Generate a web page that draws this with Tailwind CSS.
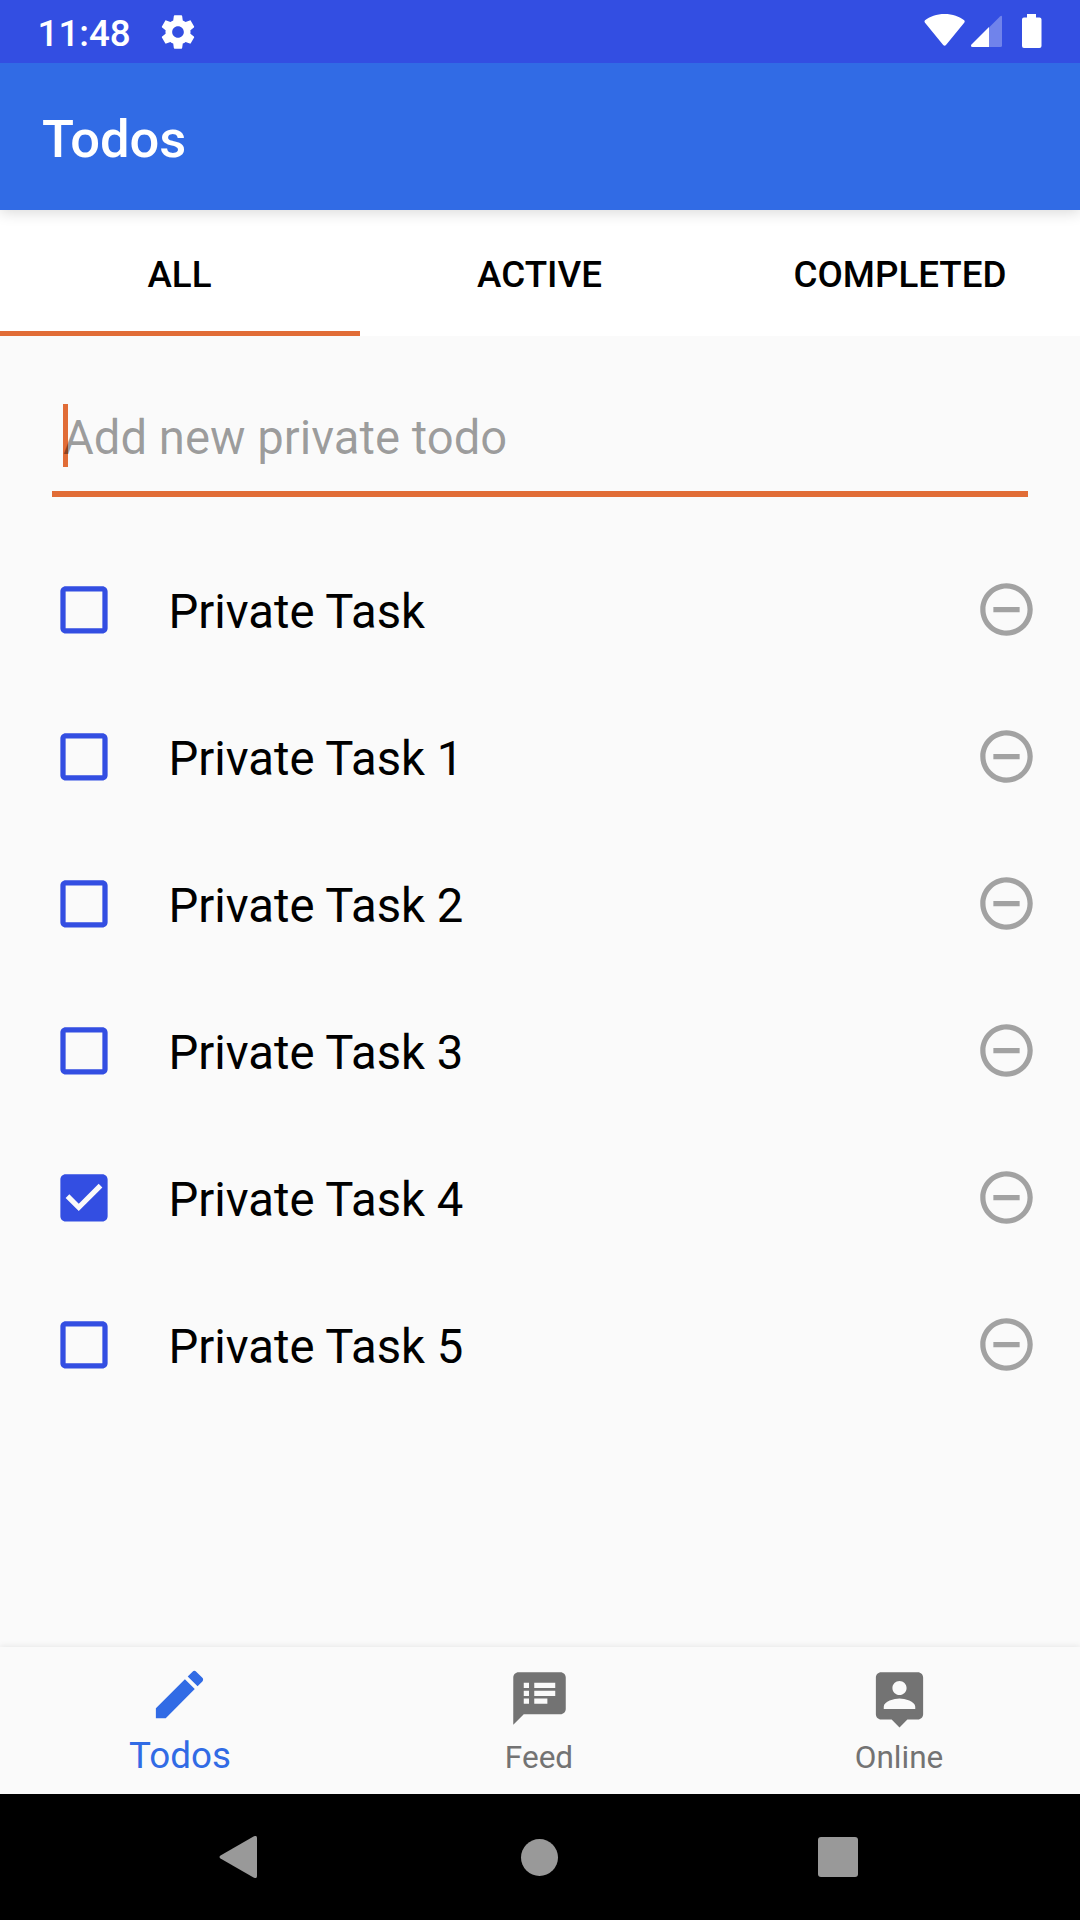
<!DOCTYPE html>
<html lang="en">
<head>
<meta charset="utf-8">
<title>Todos</title>
<script src="https://cdn.jsdelivr.net/npm/@tailwindcss/browser@4"></script>
</head>
<body class="w-[1080px] h-[1920px] overflow-hidden bg-[#fafafa] font-['Roboto',sans-serif] text-black flex flex-col">
  <header class="relative z-20 shrink-0 h-[63px] bg-[#334ee2] text-white flex items-center pl-[37.5px] pr-[33px]">
    <span class="text-[36.75px] leading-none font-medium pt-[6px]">11:48</span>
    <svg class="ml-[27.5px] size-10" viewBox="0 0 24 24" fill="currentColor"><path d="M19.43 12.98c.04-.32.07-.64.07-.98s-.03-.66-.07-.98l2.11-1.65c.19-.15.24-.42.12-.64l-2-3.46c-.12-.22-.39-.3-.61-.22l-2.49 1c-.52-.4-1.08-.73-1.69-.98l-.38-2.65C14.46 2.18 14.25 2 14 2h-4c-.25 0-.46.18-.49.42l-.38 2.65c-.61.25-1.17.59-1.69.98l-2.49-1c-.23-.09-.49 0-.61.22l-2 3.46c-.13.22-.07.49.12.64l2.11 1.65c-.04.32-.07.65-.07.98s.03.66.07.98l-2.11 1.65c-.19.15-.24.42-.12.64l2 3.46c.12.22.39.3.61.22l2.49-1c.52.4 1.08.73 1.69.98l.38 2.65c.03.24.24.42.49.42h4c.25 0 .46-.18.49-.42l.38-2.65c.61-.25 1.17-.59 1.69-.98l2.49 1c.23.09.49 0 .61-.22l2-3.46c.12-.22.07-.49-.12-.64l-2.11-1.65zM12 15.5c-1.93 0-3.5-1.57-3.5-3.5s1.57-3.5 3.5-3.5 3.5 1.57 3.5 3.5-1.57 3.5-3.5 3.5z"/></svg>
    <svg class="ml-auto w-[123px] h-[63px]" viewBox="924 0 123 63" fill="currentColor">
      <path d="M944.6 14c8 0 15 2.600 19.600 6.200q1 1 .2 2.200L946 45q-1.400 1.600-2.800 0L924.800 22.400q-.8-1.200.2-2.200c4.600-3.600 11.600-6.200 19.600-6.200z"/>
      <path opacity=".3" d="M1002 17v28.500q0 1.500-1.500 1.500H989V27.500l11-11q2-1.500 2 .5z"/>
      <path d="M989 27v20h-16.500q-2.500-.5-1-2.500z"/>
      <path d="M1027 14h9v3.500h3.500q2 0 2 2V46q0 2-2 2h-15.500q-2 0-2-2V19.500q0-2 2-2h3z"/>
    </svg>
  </header>
  <div class="relative z-10 shrink-0 h-[147px] bg-[#316be5] text-white flex items-center pl-[42px] shadow-[0_2px_14px_rgba(0,0,0,0.16)]">
    <h1 class="text-[52.5px] leading-none font-medium tracking-[-0.1px] pt-[5px]">Todos</h1>
  </div>
  <nav class="shrink-0 h-[126px] bg-white grid grid-cols-3 text-[36.75px] leading-none font-medium">
    <div class="flex items-center justify-center border-b-5 border-[#e16c36] pt-[10px] pr-px"><span>ALL</span></div>
    <div class="flex items-center justify-center border-b-5 border-transparent pt-[10px] pr-px"><span>ACTIVE</span></div>
    <div class="flex items-center justify-center border-b-5 border-transparent pt-[10px]"><span>COMPLETED</span></div>
  </nav>
  <main class="grow flex flex-col">
    <div class="mx-[52px] mt-[68px] h-[93px] border-b-6 border-[#e16c36] flex items-start pl-[11px]">
      <div class="relative h-[63px] flex items-center text-[47.25px] leading-none text-black/38">
        <i class="absolute left-0 top-0 w-[5px] h-[63px] bg-[#e16c36]"></i>
        <span class="relative pt-[7px]">Add new private todo</span>
      </div>
    </div>
    <ul id="todos" class="mt-[39px] flex flex-col text-[47.25px] leading-none"></ul>
  </main>
  <footer class="shrink-0 h-[147px] grid grid-cols-3 text-[#737373] bg-[#fafafa] shadow-[0_-1px_6px_rgba(0,0,0,0.08)]">
    <div class="flex flex-col items-center pt-[16px] text-[#316be5]">
      <svg class="size-[63px] mr-px" viewBox="0 0 24 24" fill="currentColor"><path d="M3 17.250V21h3.750L17.810 9.940l-3.750-3.750L3 17.250zM20.710 7.040c.39-.39.39-1.020 0-1.410l-2.340-2.340c-.39-.39-1.020-.39-1.410 0l-1.830 1.830 3.750 3.750 1.830-1.830z"/></svg>
      <span class="text-[36.75px] leading-none mt-3">Todos</span>
    </div>
    <div class="flex flex-col items-center pt-5">
      <svg class="size-[63px] mr-px" viewBox="0 0 24 24" fill="currentColor"><path d="M20 2H4c-1.100 0-1.990.9-1.990 2L2 22l4-4h14c1.100 0 2-.9 2-2V4c0-1.100-.9-2-2-2zM8 14H6v-2h2v2zm0-3H6V9h2v2zm0-3H6V6h2v2zm7 6h-5v-2h5v2zm3-3h-8V9h8v2zm0-3h-8V6h8v2z"/></svg>
      <span class="text-[31.5px] leading-none mt-[11.5px] mr-0.5">Feed</span>
    </div>
    <div class="flex flex-col items-center pt-5">
      <svg class="size-[63px] mr-px" viewBox="0 0 24 24" fill="currentColor"><path d="M19 2H5c-1.110 0-2 .9-2 2v14c0 1.100.89 2 2 2h4l3 3 3-3h4c1.100 0 2-.9 2-2V4c0-1.100-.9-2-2-2zm-7 3.300c1.490 0 2.700 1.210 2.700 2.700s-1.210 2.700-2.700 2.700S9.300 9.490 9.300 8s1.210-2.700 2.700-2.700zM18 16H6v-.9c0-2 4-3.100 6-3.100s6 1.100 6 3.100v.9z"/></svg>
      <span class="text-[31.5px] leading-none mt-[11.5px] mr-0.5">Online</span>
    </div>
  </footer>
  <div class="shrink-0 h-[126px] bg-black text-[#999] flex items-center justify-between pl-[219px] pr-[222px]">
    <svg class="w-[38px] h-[42px]" viewBox="0 0 38 42" fill="currentColor"><path d="M34.500.5Q38-1.200 38 2v38q0 3.200-3.500 1.500L1.500 22.500Q-.5 21 1.500 19.500z"/></svg>
    <i class="ml-1 size-[37px] rounded-full bg-[#999]"></i>
    <i class="size-10 rounded-[3px] bg-[#999]"></i>
  </div>
  <script>
    const box = '<path d="M19 5v14H5V5h14m0-2H5c-1.100 0-2 .9-2 2v14c0 1.100.9 2 2 2h14c1.100 0 2-.9 2-2V5c0-1.100-.9-2-2-2z"/>';
    const checked = '<path d="M19 3H5c-1.110 0-2 .9-2 2v14c0 1.100.89 2 2 2h14c1.110 0 2-.9 2-2V5c0-1.100-.89-2-2-2zm-9 14l-5-5 1.410-1.410L10 14.170l7.590-7.590L19 8l-9 9z"/>';
    const minus = '<path d="M7 11v2h10v-2H7zm5-9C6.480 2 2 6.480 2 12s4.480 10 10 10 10-4.480 10-10S17.520 2 12 2zm0 18c-4.410 0-8-3.590-8-8s3.590-8 8-8 8 3.590 8 8-3.590 8-8 8z"/>';
    document.getElementById('todos').innerHTML =
      ['Private Task', 'Private Task 1', 'Private Task 2', 'Private Task 3', 'Private Task 4', 'Private Task 5'].map((title, i) =>
        `<li class="h-[147px] flex items-center pl-[52px] pr-[42px]">
          <svg class="size-16 text-[#334ee2]" viewBox="0 0 24.381 24.381" fill="currentColor"><g transform="translate(.19 .19)">${i === 4 ? checked : box}</g></svg>
          <span class="ml-[52.5px] grow pt-[6px]">${title}</span>
          <svg class="size-[63px] text-[#a2a2a2]" viewBox="0 0 24 24" fill="currentColor">${minus}</svg>
        </li>`).join('');
  </script>
</body>
</html>
